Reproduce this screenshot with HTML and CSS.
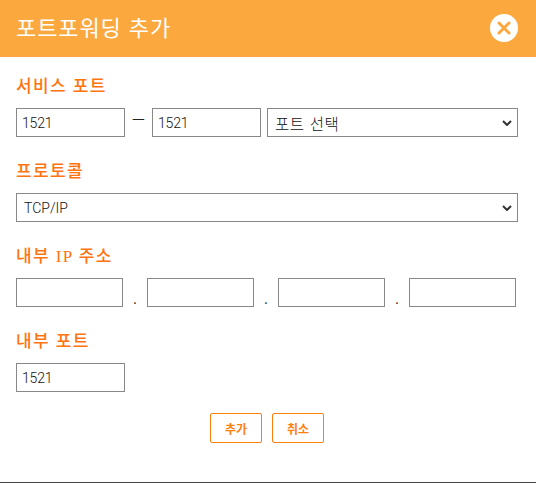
FILE: index.html
```html
<!DOCTYPE html>
<html lang="ko">
<head>
<meta charset="utf-8">
<title>포트포워딩 추가</title>
<link rel="stylesheet" href="styles.css">
</head>
<body>
<div class="dialog">
  <header class="head">
    <h1 class="title">포트포워딩 추가</h1>
    <button class="close" type="button" aria-label="닫기">
      <svg width="28" height="28" viewBox="0 0 28 28"><circle cx="14" cy="14" r="14" fill="#fff"/><path d="M9 9l10 10M19 9L9 19" stroke="#fba83e" stroke-width="3" stroke-linecap="round"/></svg>
    </button>
  </header>
  <main class="body">
    <section class="group first">
      <h2 class="label">서비스 포트</h2>
      <div class="row">
        <input class="field port" value="1521">
        <span class="dash">ㅡ</span>
        <input class="field port" value="1521">
        <select class="field grow"><option>포트 선택</option></select>
      </div>
    </section>
    <section class="group">
      <h2 class="label">프로토콜</h2>
      <div class="row">
        <select class="field grow latin"><option>TCP/IP</option></select>
      </div>
    </section>
    <section class="group">
      <h2 class="label">내부 IP 주소</h2>
      <div class="row ip">
        <input class="field octet"><span class="dot">.</span>
        <input class="field octet"><span class="dot">.</span>
        <input class="field octet"><span class="dot">.</span>
        <input class="field octet">
      </div>
    </section>
    <section class="group">
      <h2 class="label">내부 포트</h2>
      <div class="row">
        <input class="field port" value="1521">
      </div>
    </section>
    <div class="actions">
      <button class="btn" type="button">추가</button>
      <button class="btn" type="button">취소</button>
    </div>
  </main>
</div>
</body>
</html>
```
FILE: styles.css
```css
* { box-sizing: border-box; }
html, body { margin: 0; padding: 0; background: #fff; }
body { height: 483px; overflow: hidden; font-family: "Liberation Serif", "Noto Sans CJK KR", serif; }
.dialog { height: 483px; border-bottom: 1px solid #444; }
.head { height: 57px; background: #fba83e; display: flex; align-items: center; justify-content: space-between; padding: 0 18px 1px 16px; }
.title { margin: 0 0 5px; font: 400 22px/28px "Noto Sans CJK KR", sans-serif; color: #fff; letter-spacing: 0.9px; }
.close { width: 28px; height: 28px; padding: 0; border: 0; background: none; display: block; }
.close svg { display: block; }
.body { padding: 0 18px 0 16px; }
.group { margin-top: 23px; }
.group.first { margin-top: 18px; }
.label { margin: 0 0 10px; height: 23px; font: 500 17px/23px "Liberation Serif", "Noto Sans CJK KR", serif; color: #ff7410; letter-spacing: 1.4px; }
.row { display: flex; align-items: flex-start; height: 29px; }
.field { height: 29px; border: 1px solid #888; border-radius: 0; background: #fff; color: #111; }
input.field { padding: 1px 5px 0; font: 300 14px "Roboto", "Noto Sans CJK KR", sans-serif; letter-spacing: -0.2px; }
select.field { appearance: none; padding: 0 20px 0 7px; font: 300 15.5px "Noto Sans CJK KR", sans-serif; letter-spacing: 0.6px; background: #fff url("data:image/svg+xml,%3Csvg xmlns='http://www.w3.org/2000/svg' width='10' height='6'%3E%3Cpath d='M1 1l4 4 4-4' fill='none' stroke='%23333' stroke-width='2'/%3E%3C/svg%3E") no-repeat right 5px center; }
select.latin { font: 300 14px "Roboto", sans-serif; letter-spacing: 0; }
.port { width: 109px; }
.dash { width: 27px; text-align: center; font: 400 14px/22px "Noto Sans CJK KR", sans-serif; color: #222; }
.grow { flex: 1; min-width: 0; margin-left: 6px; }
.row > .grow:first-child { margin-left: 0; }
.octet { width: 107px; }
.dot { width: 24px; text-align: center; font: 400 12px/42px "Noto Sans CJK KR", sans-serif; color: #222; }
.actions { display: flex; justify-content: center; gap: 10px; margin-top: 21px; }
.btn { width: 52px; height: 30px; padding: 0; background: #fff; border: 1px solid #ff7f0e; border-radius: 2px; color: #ff7f0e; font: 700 12px "Noto Sans CJK KR", sans-serif; }
```
